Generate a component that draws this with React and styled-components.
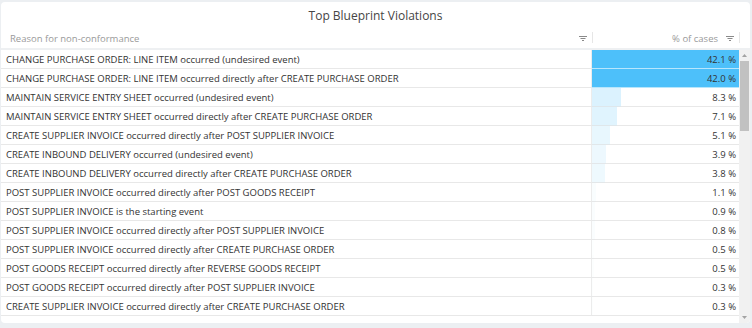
import React from "react";
import styled, { createGlobalStyle } from "styled-components";

const Global = createGlobalStyle`
  html, body { margin: 0; padding: 0; background: #eceff2; }
  body { font-family: "Open Sans", "Liberation Sans", sans-serif; }
`;

const rows = [
  ["CHANGE PURCHASE ORDER: LINE ITEM occurred (undesired event)", 42.1],
  ["CHANGE PURCHASE ORDER: LINE ITEM occurred directly after CREATE PURCHASE ORDER", 42.0],
  ["MAINTAIN SERVICE ENTRY SHEET occurred (undesired event)", 8.3],
  ["MAINTAIN SERVICE ENTRY SHEET occurred directly after CREATE PURCHASE ORDER", 7.1],
  ["CREATE SUPPLIER INVOICE occurred directly after POST SUPPLIER INVOICE", 5.1],
  ["CREATE INBOUND DELIVERY occurred (undesired event)", 3.9],
  ["CREATE INBOUND DELIVERY occurred directly after CREATE PURCHASE ORDER", 3.8],
  ["POST SUPPLIER INVOICE occurred directly after POST GOODS RECEIPT", 1.1],
  ["POST SUPPLIER INVOICE is the starting event", 0.9],
  ["POST SUPPLIER INVOICE occurred directly after POST SUPPLIER INVOICE", 0.8],
  ["POST SUPPLIER INVOICE occurred directly after CREATE PURCHASE ORDER", 0.5],
  ["POST GOODS RECEIPT occurred directly after REVERSE GOODS RECEIPT", 0.5],
  ["POST GOODS RECEIPT occurred directly after POST SUPPLIER INVOICE", 0.3],
  ["CREATE SUPPLIER INVOICE occurred directly after CREATE PURCHASE ORDER", 0.3],
];
const max = 42.1;

const Card = styled.div`
  margin: 2px 2px 0 1px;
  height: 321px;
  background: #fff;
  border-radius: 4px;
  display: flex;
  flex-direction: column;
  overflow: hidden;
`;

const Title = styled.div`
  height: 26px;
  display: flex;
  align-items: center;
  justify-content: center;
  font-size: 12px;
  color: #454545;
`;

const Header = styled.div`
  height: 20px;
  display: grid;
  grid-template-columns: 1fr 147px 10px;
  border-bottom: 2px solid #eef0f2;
`;

const HeadCell = styled.div`
  display: flex;
  align-items: center;
  justify-content: ${(p) => (p.$right ? "flex-end" : "space-between")};
  gap: 8px;
  padding: 0 6px 0 ${(p) => (p.$right ? "0" : "9px")};
  font-size: 9.5px;
  color: #9a9a9a;
  position: relative;
  &::after {
    content: "";
    position: absolute;
    right: 0;
    top: 4px;
    height: 11px;
    width: 1px;
    background: #e6e6e6;
  }
`;

const Body = styled.div`
  flex: 1;
  display: flex;
  min-height: 0;
`;

const List = styled.div`
  flex: 1;
  overflow: hidden;
`;

const Row = styled.div`
  height: 18px;
  display: grid;
  grid-template-columns: 1fr 147px;
  border-bottom: 1px solid #e8e8e8;
`;

const Reason = styled.div`
  display: flex;
  align-items: center;
  padding-left: 5px;
  font-size: 9.5px;
  color: #333;
  white-space: nowrap;
  border-right: 1px solid #ececec;
`;

const Value = styled.div`
  position: relative;
  display: flex;
  align-items: center;
  justify-content: flex-end;
  padding-right: 3px;
  font-size: 9.5px;
  color: #333;
`;

const Bar = styled.div`
  position: absolute;
  left: 0;
  top: 0;
  bottom: -1px;
  background: rgb(77, 192, 250);
  border-bottom: 1px solid rgba(255, 255, 255, 0.6);
`;

const ValueText = styled.span`
  position: relative;
`;

const Scrollbar = styled.div`
  width: 11px;
  background: #f1f1f1;
  display: flex;
  flex-direction: column;
  align-items: center;
`;

const Arrow = styled.div`
  height: 11px;
  width: 11px;
  display: flex;
  align-items: center;
  justify-content: center;
`;

const Thumb = styled.div`
  width: 9px;
  height: 70px;
  background: #c1c1c1;
`;

const Spacer = styled.div`
  flex: 1;
`;

const FilterIcon = () => (
  <svg width="8" height="5" viewBox="0 0 8 5">
    <rect x="0" y="0" width="8" height="1" fill="#8a8a8a" />
    <rect x="1.5" y="2" width="5" height="1" fill="#8a8a8a" />
    <rect x="3" y="4" width="2" height="1" fill="#8a8a8a" />
  </svg>
);

const Tri = ({ down }) => (
  <svg width="5" height="3" viewBox="0 0 5 3">
    <path d={down ? "M0 0H5L2.5 3Z" : "M0 3H5L2.5 0Z"} fill="#a3a3a3" />
  </svg>
);

export default function App() {
  return (
    <>
      <Global />
      <Card>
        <Title>Top Blueprint Violations</Title>
        <Header>
          <HeadCell>
            <span>Reason for non-conformance</span>
            <FilterIcon />
          </HeadCell>
          <HeadCell $right>
            <span>% of cases</span>
            <FilterIcon />
          </HeadCell>
          <div />
        </Header>
        <Body>
          <List>
            {rows.map(([label, v], i) => (
              <Row key={i}>
                <Reason>{label}</Reason>
                <Value>
                  <Bar style={{ width: `${(v / max) * 100}%`, opacity: v / max }} />
                  <ValueText>{v.toFixed(1)} %</ValueText>
                </Value>
              </Row>
            ))}
          </List>
          <Scrollbar>
            <Arrow><Tri /></Arrow>
            <Thumb />
            <Spacer />
            <Arrow><Tri down /></Arrow>
          </Scrollbar>
        </Body>
      </Card>
    </>
  );
}
